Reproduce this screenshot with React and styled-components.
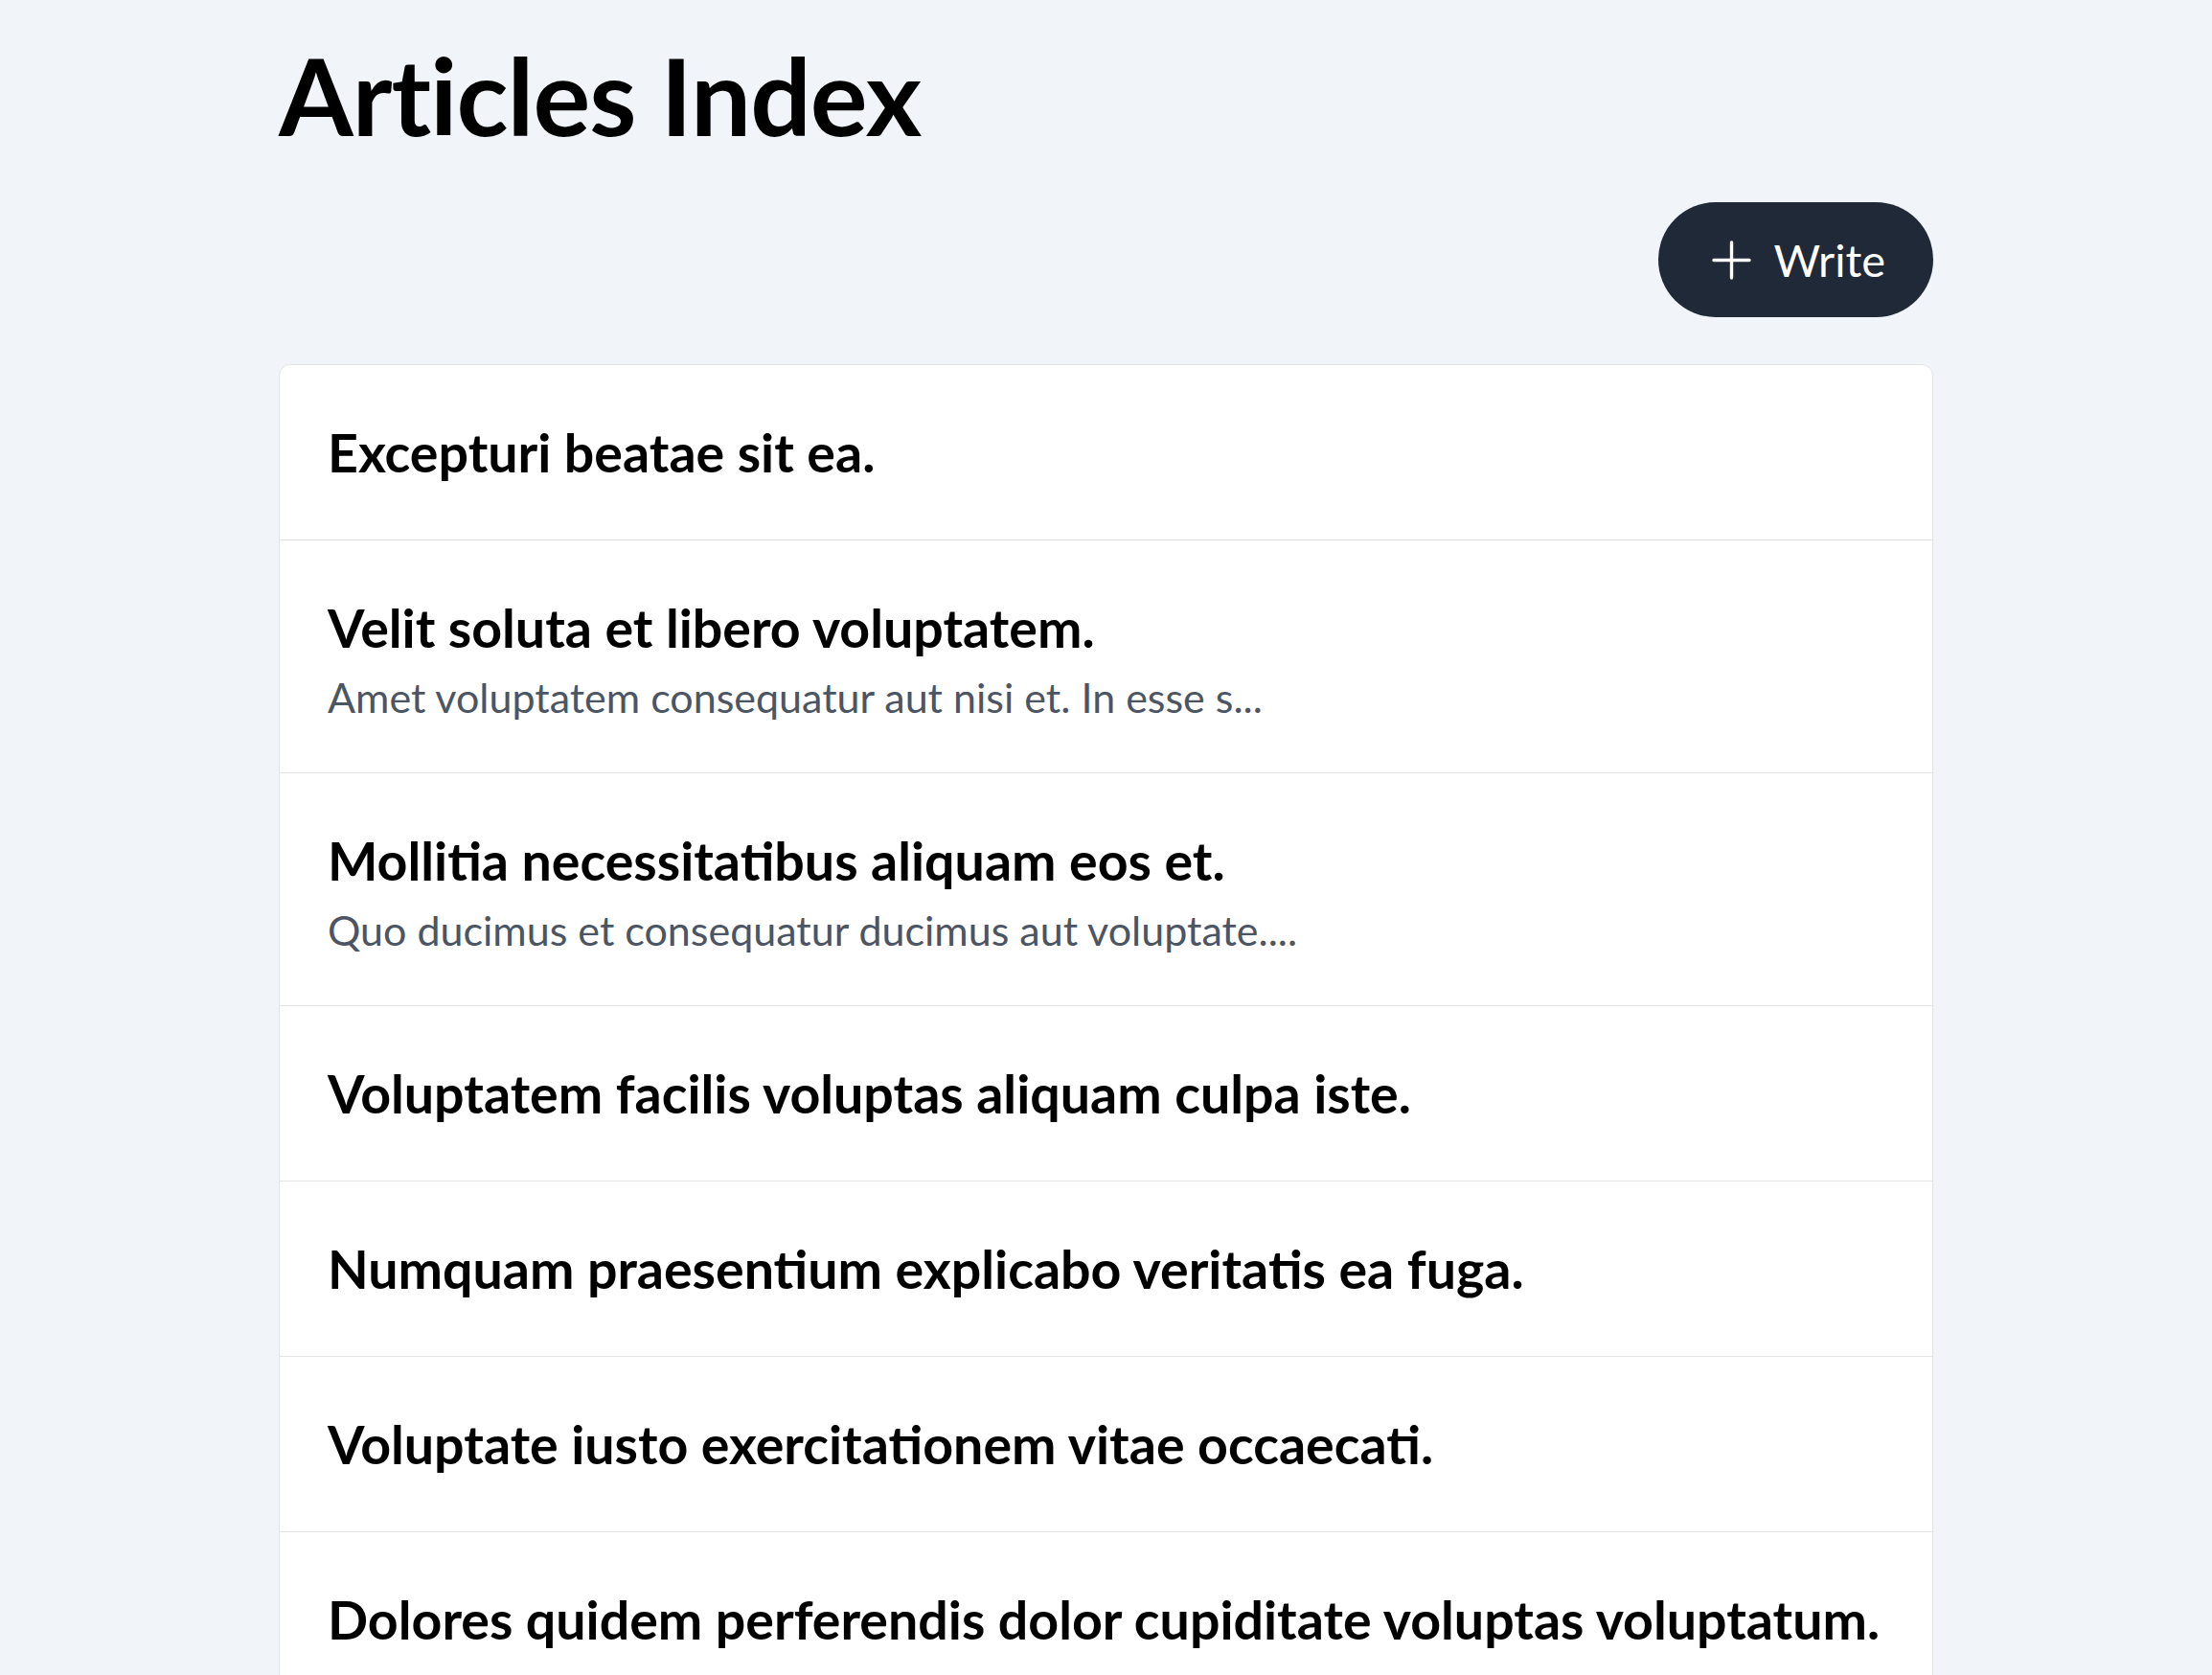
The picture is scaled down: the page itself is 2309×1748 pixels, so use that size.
import React from 'react';
import styled, { createGlobalStyle } from 'styled-components';

const GlobalStyle = createGlobalStyle`
    html, body {
        margin:0;
        padding:0;
        background:#f1f4f9;
        font-family:"Lato", "Noto Sans", sans-serif;
        color:#000;
    }
`;

const articles = [
    { id: 1, title: 'Excepturi beatae sit ea.' },
    { id: 2, title: 'Velit soluta et libero voluptatem.', excerpt: 'Amet voluptatem consequatur aut nisi et. In esse s...' },
    { id: 3, title: 'Mollitia necessitatibus aliquam eos et.', excerpt: 'Quo ducimus et consequatur ducimus aut voluptate....' },
    { id: 4, title: 'Voluptatem facilis voluptas aliquam culpa iste.' },
    { id: 5, title: 'Numquam praesentium explicabo veritatis ea fuga.' },
    { id: 6, title: 'Voluptate iusto exercitationem vitae occaecati.' },
    { id: 7, title: 'Dolores quidem perferendis dolor cupiditate voluptas voluptatum.', excerpt: 'Et dolor id tenetur ut mollitia laudantium et quia...' },
];

const PlusIcon = () => (
    <svg width="41" height="41" viewBox="0 0 41 41" fill="none" stroke="currentColor" strokeWidth="3.4" strokeLinecap="round">
        <path d="M20.5 2v37M2 20.5h37" />
    </svg>
);

const App = () => {
    return (
        <>
            <GlobalStyle />
            <Page>
                <Title>Articles Index</Title>
                <Toolbar>
                    <WriteBtn type="button">
                        <PlusIcon />
                        <span>Write</span>
                    </WriteBtn>
                </Toolbar>
                <List>
                    {articles.map((a) => (
                        <Row key={a.id}>
                            <RowTitle>{a.title}</RowTitle>
                            {a.excerpt && <Excerpt>{a.excerpt}</Excerpt>}
                        </Row>
                    ))}
                </List>
            </Page>
        </>
    );
};

export default App;

const Page = styled.div`
    width:1727px;
    margin:0 auto;
    padding-top:43px;
    box-sizing:border-box;
`;

const Title = styled.h1`
    margin:0;
    font-size:112px;
    line-height:1;
    font-weight:700;
    letter-spacing:-1px;
`;

const Toolbar = styled.div`
    display:flex;
    justify-content:flex-end;
    margin-top:56px;
`;

const WriteBtn = styled.button`
    display:flex;
    align-items:center;
    gap:23px;
    height:120px;
    padding:0 50px 0 56px;
    border:none;
    border-radius:60px;
    background:#1f2937;
    color:#fff;
    font-family:"Lato", sans-serif;
    font-size:47px;
    cursor:pointer;
`;

const List = styled.div`
    margin-top:48.5px;
    background:#fff;
    border:1.5px solid #e2e4e8;
    border-radius:12px;
    overflow:hidden;
`;

const Row = styled.div`
    padding:48px 50px;
    border-top:1.5px solid #e2e4e8;
    &:first-child {
        border-top:none;
    }
`;

const RowTitle = styled.div`
    font-size:55.5px;
    line-height:86px;
    font-weight:700;
    white-space:nowrap;
`;

const Excerpt = styled.div`
    font-size:43px;
    line-height:60px;
    color:#4b5563;
`;
